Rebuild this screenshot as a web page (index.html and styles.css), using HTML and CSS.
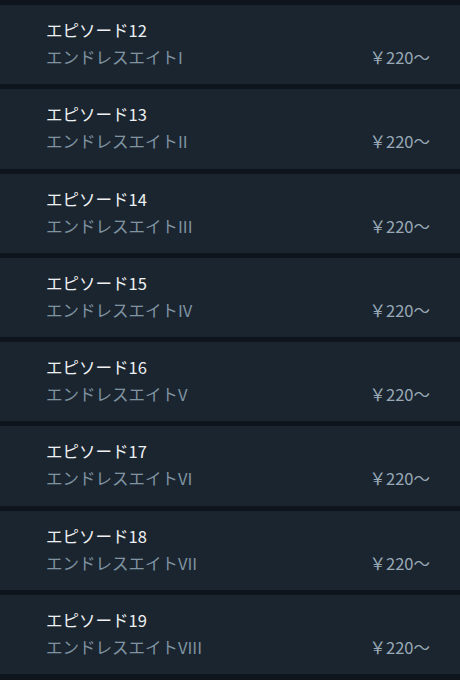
FILE: index.html
```html
<!DOCTYPE html>
<html lang="ja">
<head>
    <meta charset="UTF-8">
    <meta name="viewport" content="width=device-width, initial-scale=1.0">
    <title>エピソード</title>
    <link rel="stylesheet" href="styles.css">
</head>
<body>
    <ul class="episodes">
        <li class="episode">
            <p class="ep-title">エピソード12</p>
            <div class="ep-row"><span class="ep-sub">エンドレスエイトI</span><span class="ep-price">￥220～</span></div>
        </li>
        <li class="episode">
            <p class="ep-title">エピソード13</p>
            <div class="ep-row"><span class="ep-sub">エンドレスエイトII</span><span class="ep-price">￥220～</span></div>
        </li>
        <li class="episode">
            <p class="ep-title">エピソード14</p>
            <div class="ep-row"><span class="ep-sub">エンドレスエイトIII</span><span class="ep-price">￥220～</span></div>
        </li>
        <li class="episode">
            <p class="ep-title">エピソード15</p>
            <div class="ep-row"><span class="ep-sub">エンドレスエイトIV</span><span class="ep-price">￥220～</span></div>
        </li>
        <li class="episode">
            <p class="ep-title">エピソード16</p>
            <div class="ep-row"><span class="ep-sub">エンドレスエイトV</span><span class="ep-price">￥220～</span></div>
        </li>
        <li class="episode">
            <p class="ep-title">エピソード17</p>
            <div class="ep-row"><span class="ep-sub">エンドレスエイトVI</span><span class="ep-price">￥220～</span></div>
        </li>
        <li class="episode">
            <p class="ep-title">エピソード18</p>
            <div class="ep-row"><span class="ep-sub">エンドレスエイトVII</span><span class="ep-price">￥220～</span></div>
        </li>
        <li class="episode">
            <p class="ep-title">エピソード19</p>
            <div class="ep-row"><span class="ep-sub">エンドレスエイトVIII</span><span class="ep-price">￥220～</span></div>
        </li>
    </ul>
</body>
</html>
```

FILE: styles.css
```css
body {
    background-color: #0e151c;
    font-family: 'Noto Sans CJK JP', 'Noto Sans', sans-serif;
    margin: 0;
    padding: 0;
}

.episodes {
    list-style: none;
    margin: 0;
    padding: 5px 0 0;
    display: flex;
    flex-direction: column;
    gap: 5px;
}

.episode {
    background-color: #1b2530;
    padding: 13px 30px 15px 46px;
    height: 79.25px;
    box-sizing: border-box;
}

.ep-title {
    margin: 0 0 3px;
    font-size: 16.5px;
    line-height: 24px;
    color: #eef1f3;
}

.ep-row {
    display: flex;
    justify-content: space-between;
    font-size: 16.5px;
    line-height: 24px;
}

.ep-sub {
    color: #7f93a0;
}

.ep-price {
    color: #98a9b5;
}
```
